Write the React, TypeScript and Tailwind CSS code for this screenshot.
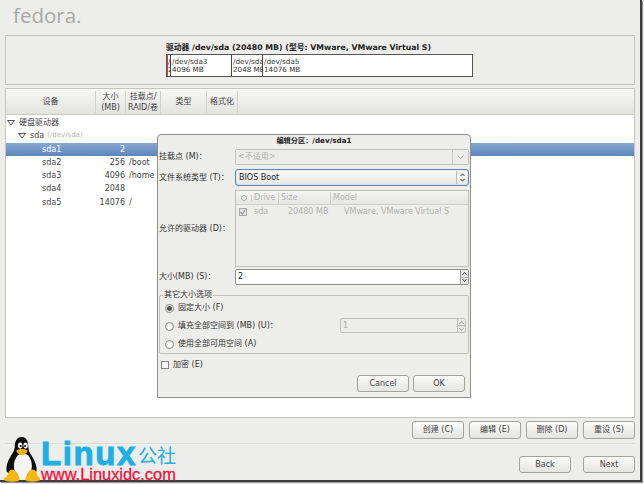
const FONT = "font-['DejaVu_Sans','Noto_Sans_CJK_SC',sans-serif]";

const rows = [
  { name: 'sda1', size: '2', mount: '', selected: true },
  { name: 'sda2', size: '256', mount: '/boot' },
  { name: 'sda3', size: '4096', mount: '/home' },
  { name: 'sda4', size: '2048', mount: '' },
  { name: 'sda5', size: '14076', mount: '/' },
];

function Btn({ children, className = '' }: { children: React.ReactNode; className?: string }) {
  return (
    <div className={`flex items-center justify-center rounded-[3px] border border-[#a3a3a0] bg-gradient-to-b from-[#fbfbfa] to-[#e4e4e1] text-[8px] text-[#444] ${className}`}>
      {children}
    </div>
  );
}

function Arrow({ className = '' }: { className?: string }) {
  return (
    <svg width="8" height="6" viewBox="0 0 8 6" className={className}>
      <path d="M0.5 0.5h7L4 5z" fill="#fff" stroke="#555" strokeWidth="1" />
    </svg>
  );
}

function Radio({ checked }: { checked?: boolean }) {
  return (
    <span className="flex h-[9px] w-[9px] items-center justify-center rounded-full border border-[#888] bg-white">
      {checked && <span className="h-[5px] w-[5px] rounded-full bg-[#555]" />}
    </span>
  );
}

function Spin({ muted }: { muted?: boolean }) {
  const c = muted ? '#aaa' : '#444';
  return (
    <div className={`flex w-[8px] flex-col border-l ${muted ? 'border-[#bbb]' : 'border-[#999]'} bg-[#e8e8e6]`}>
      <div className="flex flex-1 items-center justify-center border-b border-[#bbb]">
        <svg width="5" height="3" viewBox="0 0 5 3"><path d="M0.5 3L2.5 0.5 4.5 3" fill="none" stroke={c} /></svg>
      </div>
      <div className="flex flex-1 items-center justify-center">
        <svg width="5" height="3" viewBox="0 0 5 3"><path d="M0.5 0L2.5 2.5 4.5 0" fill="none" stroke={c} /></svg>
      </div>
    </div>
  );
}

function Penguin() {
  return (
    <svg width="38" height="46" viewBox="0 0 42 48" preserveAspectRatio="none">
      <path d="M21 1c-6 0-8 5-8 10 0 4-2 6-5 11-3 5-5 10-4 15l5 4h22l6-4c1-6-2-11-5-16-3-4-4-6-4-10 0-5-2-10-7-10z" fill="#0c0c0c" />
      <ellipse cx="22" cy="31" rx="10" ry="13" fill="#f5f5f5" />
      <ellipse cx="19" cy="10" rx="2.4" ry="3.2" fill="#fff" />
      <ellipse cx="25" cy="10" rx="2.4" ry="3.2" fill="#fff" />
      <circle cx="19.5" cy="10.5" r="1.2" fill="#111" />
      <circle cx="24.5" cy="10.5" r="1.2" fill="#111" />
      <path d="M15 15c3-2 9-2 12 0 1 1-3 5-6 5s-7-4-6-5z" fill="#f0b010" />
      <path d="M10 35c-3 0-4 3-5 6-1 2-5 3-4 5 3 2 11 2 16 1 2-1 1-3 0-6-1-3-4-6-7-6z" fill="#f3b816" />
      <path d="M33 35c3 0 4 3 5 6 1 2 4 3 3 5-3 2-10 2-15 1-2-1-1-3 0-6 1-3 4-6 7-6z" fill="#f3b816" />
    </svg>
  );
}

export default function App() {
  return (
    <div className={`relative h-[484px] w-[644px] overflow-hidden bg-white ${FONT}`}>
      <div className="flex h-[482px] w-[642px] flex-col border-b-2 border-r-2 border-[#3c3c3c] bg-[#ededeb] shadow-[1px_1px_1px_#999]">
        <div className="flex h-[35px] shrink-0 items-start pl-[13px] pt-[1px]">
          <span className="font-['Open_Sans',sans-serif] text-[20.5px] leading-[28px] text-[#a9a9a7]">fedora.</span>
        </div>

        <div className="mx-[5px] flex h-[50px] shrink-0 flex-col border border-[#c4c4c1] pl-[160px] pt-[7px]">
          <div className="text-[7.8px] font-bold leading-[10px] text-[#222]">驱动器 /dev/sda (20480 MB) (型号: VMware, VMware Virtual S)</div>
          <div className="mt-[1px] flex h-[23px] w-[307px] border border-[#555] bg-white text-[7.2px] leading-[8px] text-[#333]">
            <div className="w-[1px] bg-[#e33]" />
            <div className="w-[3px] overflow-hidden border-r border-[#444] pt-[3px]">/<br />2</div>
            <div className="w-[61px] border-r border-[#444] pl-[1px] pt-[3px]">/dev/sda3<br />4096 MB</div>
            <div className="w-[31px] overflow-hidden whitespace-nowrap border-r border-[#444] pl-[1px] pt-[3px]">/dev/sda<br />2048 MB</div>
            <div className="pl-[1px] pt-[3px]">/dev/sda5<br />14076 MB</div>
          </div>
        </div>

        <div className="relative mx-[5px] mt-[3px] flex h-[330px] shrink-0 flex-col border border-[#c4c4c1] bg-white">
          <div className="flex h-[26px] shrink-0 items-center border-b border-[#c9c9c6] bg-gradient-to-b from-[#f7f7f6] to-[#e3e3e0] text-center text-[8px] leading-[11px] text-[#444]">
            <div className="flex h-[22px] w-[90px] items-center justify-center border-r border-[#d0d0cd]">设备</div>
            <div className="flex h-[22px] w-[30px] items-center justify-center border-r border-[#d0d0cd]">大小<br />(MB)</div>
            <div className="flex h-[22px] w-[35px] items-center justify-center border-r border-[#d0d0cd]">挂载点/<br />RAID/卷</div>
            <div className="flex h-[22px] w-[46px] items-center justify-center border-r border-[#d0d0cd]">类型</div>
            <div className="flex h-[22px] w-[31px] items-center justify-center border-r border-[#d0d0cd]">格式化</div>
          </div>
          <div className="pt-[1px] text-[8px] leading-[13.25px] text-[#444]">
            <div className="flex h-[13.25px] items-center pl-[1px]">
              <Arrow />
              <span className="ml-[4px]">硬盘驱动器</span>
            </div>
            <div className="flex h-[13.25px] items-center pl-[12px]">
              <Arrow />
              <span className="ml-[4px]">sda</span>
              <span className="ml-[3px] text-[7px] text-[#b5b5b5]">(/dev/sda)</span>
            </div>
            {rows.map((r) => (
              <div key={r.name} className={`flex h-[13.25px] items-center ${r.selected ? 'bg-gradient-to-b from-[#86a8d2] to-[#5d86bb] text-white' : ''}`}>
                <span className="w-[82px] pl-[36px]">{r.name}</span>
                <span className="w-[37px] text-right">{r.size}</span>
                <span className="ml-[4px]">{r.mount}</span>
              </div>
            ))}
          </div>

          {/* 编辑分区 dialog floats over the list */}
          <div className="absolute left-[151px] top-[45px] h-[264px] w-[314px] rounded-t-[4px] border border-[#8e8e8c] bg-[#ededeb] text-[8px] text-[#333]">
            <div className="pt-[1px] text-center text-[7.2px] font-bold leading-[10px] text-[#222]">编辑分区：/dev/sda1</div>

            <div className="mt-[3px] flex h-[16px] items-center pl-[1px]">
              <span className="w-[76px] whitespace-nowrap">挂载点 (M)：</span>
              <div className="flex h-[16px] w-[234px] items-center rounded-[2px] border border-[#c0c0bd] pl-[2px] text-[#b0b0ae]">
                <span className="flex-1">&lt;不适用&gt;</span>
                <div className="flex h-full w-[16px] items-center justify-center border-l border-[#c8c8c5]">
                  <svg width="7" height="4" viewBox="0 0 7 4"><path d="M0.5 0.5L3.5 3.5 6.5 0.5" fill="none" stroke="#aaa" /></svg>
                </div>
              </div>
            </div>

            <div className="mt-[4px] flex h-[17px] items-center pl-[1px]">
              <span className="w-[76px] whitespace-nowrap">文件系统类型 (T)：</span>
              <div className="flex h-[17px] w-[234px] items-center rounded-[3px] border border-[#5f87b5] bg-gradient-to-b from-[#fafafa] to-[#e6e6e4] pl-[3px] text-[#222] shadow-[inset_0_0_1px_#7ea3cc]">
                <span className="flex-1">BIOS Boot</span>
                <div className="flex h-[13px] w-[12px] items-center justify-center border-l border-[#bbb]">
                  <svg width="5" height="9" viewBox="0 0 5 9"><path d="M0.5 3L2.5 0.8 4.5 3M0.5 6L2.5 8.2 4.5 6" fill="none" stroke="#444" /></svg>
                </div>
              </div>
            </div>

            <div className="mt-[4px] flex h-[77px] items-center pl-[1px]">
              <span className="w-[76px] whitespace-nowrap">允许的驱动器 (D)：</span>
              <div className="h-[77px] w-[234px] border border-[#bdbdba] text-[#b2b2b0]">
                <div className="flex h-[14px] items-center border-b border-[#d0d0cd] bg-gradient-to-b from-[#f4f4f3] to-[#e6e6e4]">
                  <span className="flex w-[16px] items-center justify-center border-r border-[#ccc]"><span className="h-[6px] w-[6px] rounded-full border border-[#aaa]" /></span>
                  <span className="w-[27px] border-r border-[#ccc] pl-[2px]">Drive</span>
                  <span className="w-[52px] border-r border-[#ccc] pl-[2px]">Size</span>
                  <span className="pl-[2px]">Model</span>
                </div>
                <div className="flex h-[14px] items-center pl-[3px]">
                  <span className="flex h-[8px] w-[8px] items-center justify-center border border-[#aaa] bg-[#e4e4e2]">
                    <svg width="6" height="6" viewBox="0 0 6 6"><path d="M0.5 3L2.3 5 5.5 0.5" fill="none" stroke="#999" strokeWidth="1.2" /></svg>
                  </span>
                  <span className="ml-[7px] w-[34px]">sda</span>
                  <span className="w-[56px]">20480 MB</span>
                  <span className="whitespace-nowrap">VMware, VMware Virtual S</span>
                </div>
              </div>
            </div>

            <div className="mt-[2px] flex h-[16px] items-center pl-[1px]">
              <span className="w-[76px] whitespace-nowrap">大小(MB) (S)：</span>
              <div className="flex h-[16px] w-[234px] rounded-[2px] border border-[#8e8e8c] bg-white">
                <span className="flex-1 pl-[2px] leading-[14px] text-[#222]">2</span>
                <Spin />
              </div>
            </div>

            <div className="relative ml-[1px] mt-[10px] h-[59px] w-[310px] rounded-[2px] border border-[#c0c0bd] px-[5px] pt-[3px]">
              <span className="absolute -top-[6px] left-[3px] bg-[#ededeb] px-[1px] leading-[10px]">其它大小选项</span>
              <div className="flex h-[18px] items-center gap-[4px]"><Radio checked /><span>固定大小 (F)</span></div>
              <div className="flex h-[18px] items-center gap-[4px]">
                <Radio />
                <span>填充全部空间到 (MB) (U)：</span>
                <div className="absolute left-[180px] top-[22px] flex h-[15px] w-[126px] rounded-[2px] border border-[#c0c0bd] text-[#aaa]">
                  <span className="flex-1 pl-[2px] leading-[13px]">1</span>
                  <Spin muted />
                </div>
              </div>
              <div className="flex h-[18px] items-center gap-[4px]"><Radio /><span>使用全部可用空间 (A)</span></div>
            </div>

            <div className="ml-[3px] mt-[5px] flex h-[12px] items-center gap-[4px]">
              <span className="h-[8px] w-[8px] border border-[#888] bg-white" />
              <span>加密 (E)</span>
            </div>

            <div className="mr-[5px] mt-[4px] flex justify-end gap-[4px]">
              <Btn className="h-[17px] w-[52px] text-[#222]">Cancel</Btn>
              <Btn className="h-[17px] w-[52px] text-[#222]">OK</Btn>
            </div>
          </div>
        </div>

        <div className="mx-[5px] mt-[3px] flex justify-end gap-[5px]">
          <Btn className="h-[18px] w-[52px]">创建 (C)</Btn>
          <Btn className="h-[18px] w-[52px]">编辑 (E)</Btn>
          <Btn className="h-[18px] w-[52px]">删除 (D)</Btn>
          <Btn className="h-[18px] w-[52px]">重设 (S)</Btn>
        </div>

        <div className="mx-[5px] mt-[4px] h-[2px] shrink-0 border-t border-[#dcdcd9] bg-[#f2f2f0]" />

        <div className="mr-[5px] mt-[11px] flex justify-end gap-[12px]">
          <Btn className="h-[17px] w-[52px]">Back</Btn>
          <Btn className="h-[17px] w-[52px]">Next</Btn>
        </div>
      </div>

      {/* site watermark, lower left */}
      <div className="absolute left-[3px] top-[436px] flex items-start">
        <Penguin />
        <div className="flex flex-col font-['Liberation_Sans','Noto_Sans_CJK_SC',sans-serif]">
          <div className="flex h-[32px] items-end">
            <span className="text-[33px] font-bold leading-[29px] tracking-[1.6px] text-[#1cb0e4] [-webkit-text-stroke:1px_#1cb0e4]">Linux</span>
            <span className="ml-[1px] text-[19px] leading-[23px] text-[#1cb0e4]">公社</span>
          </div>
          <span className="whitespace-nowrap text-[16.4px] leading-[13px] text-[#f2113c] [-webkit-text-stroke:0.3px_#f2113c]">www.Linuxidc.com</span>
        </div>
      </div>
    </div>
  );
}
